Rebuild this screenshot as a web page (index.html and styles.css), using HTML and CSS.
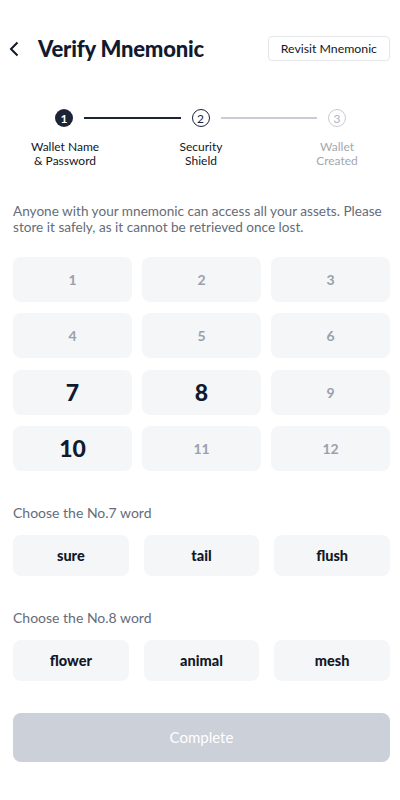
FILE: index.html
```html
<!DOCTYPE html>
<html lang="en">
<head>
    <meta charset="UTF-8">
    <meta name="viewport" content="width=device-width, initial-scale=1.0">
    <title>Verify Mnemonic</title>
    <link rel="stylesheet" href="styles.css">
</head>
<body>

    <div class="page">
        <!-- Header -->
        <div class="header">
            <span class="back">
                <svg width="10" height="16" viewBox="0 0 10 16"><path d="M8.5 1.5 L2 8 L8.5 14.5" fill="none" stroke="#111827" stroke-width="2"/></svg>
            </span>
            <h1>Verify Mnemonic</h1>
            <button class="revisit">Revisit Mnemonic</button>
        </div>

        <!-- Steps -->
        <div class="steps">
            <span class="dot done">1</span>
            <span class="line dark"></span>
            <span class="dot current">2</span>
            <span class="line"></span>
            <span class="dot todo">3</span>
        </div>
        <div class="step-labels">
            <span>Wallet Name<br>&amp; Password</span>
            <span>Security<br>Shield</span>
            <span class="muted">Wallet<br>Created</span>
        </div>

        <p class="note">Anyone with your mnemonic can access all your assets. Please store it safely, as it cannot be retrieved once lost.</p>

        <div class="words">
            <div class="cell">1</div>
            <div class="cell">2</div>
            <div class="cell">3</div>
            <div class="cell">4</div>
            <div class="cell">5</div>
            <div class="cell">6</div>
            <div class="cell big">7</div>
            <div class="cell big">8</div>
            <div class="cell">9</div>
            <div class="cell big">10</div>
            <div class="cell">11</div>
            <div class="cell">12</div>
        </div>

        <div class="question">Choose the No.7 word</div>
        <div class="options">
            <button>sure</button>
            <button>tail</button>
            <button>flush</button>
        </div>

        <div class="question">Choose the No.8 word</div>
        <div class="options">
            <button>flower</button>
            <button>animal</button>
            <button>mesh</button>
        </div>

        <button class="complete" disabled>Complete</button>
    </div>

</body>
</html>
```

FILE: styles.css
```css
body {
    margin: 0;
    font-family: Lato, "Noto Sans", sans-serif;
    background: #fff;
    color: #111827;
}

.page {
    padding: 36px 10px 0 13px;
}

.header {
    display: flex;
    align-items: center;
    height: 25px;
}

.back {
    display: flex;
    align-items: center;
    width: 29px;
    margin-left: -4px;
}

h1 {
    flex: 1;
    margin: 0;
    font-size: 22px;
    font-weight: 900;
    color: #111a2e;
    letter-spacing: -0.2px;
}

.revisit {
    height: 25px;
    padding: 0 12px;
    border: 1px solid #e5e7eb;
    border-radius: 4px;
    background: #fff;
    font-family: inherit;
    font-size: 12.3px;
    color: #111827;
}

.steps {
    display: flex;
    align-items: center;
    padding: 0 44px 0 42px;
    margin-top: 48px;
}

.dot {
    width: 18px;
    height: 18px;
    border-radius: 50%;
    box-sizing: border-box;
    display: flex;
    align-items: center;
    justify-content: center;
    font-size: 12px;
}

.dot.done {
    background: #1c2436;
    color: #fff;
    font-weight: 700;
}

.dot.current {
    border: 1.5px solid #1c2436;
    color: #1c2436;
}

.dot.todo {
    border: 1.5px solid #c7cbd2;
    color: #b0b5be;
}

.line {
    flex: 1;
    height: 1.5px;
    margin: 0 11px;
    background: #c9cdd3;
}

.line.dark {
    background: #1c2436;
}

.step-labels {
    display: flex;
    justify-content: space-between;
    margin-top: 13px;
    margin-right: 1px;
}

.step-labels span {
    width: 104px;
    text-align: center;
    font-size: 12px;
    line-height: 14px;
    color: #111827;
}

.step-labels .muted {
    color: #a3a8b1;
}

.note {
    margin: 35px 0 0;
    font-size: 13.6px;
    line-height: 16px;
    color: #656c78;
}

.words {
    display: grid;
    grid-template-columns: repeat(3, 1fr);
    column-gap: 10px;
    row-gap: 11.3px;
    margin-top: 22px;
}

.cell {
    height: 45px;
    border-radius: 8px;
    background: #f5f6f8;
    display: flex;
    align-items: center;
    justify-content: center;
    font-size: 14px;
    font-weight: 700;
    color: #9aa0ab;
}

.cell.big {
    font-size: 23px;
    font-weight: 900;
    color: #111a2e;
}

.question {
    margin-top: 33px;
    font-size: 14px;
    line-height: 18px;
    color: #656c78;
}

.options {
    display: grid;
    grid-template-columns: repeat(3, 1fr);
    gap: 15px;
    margin-top: 13px;
}

.options button {
    height: 41px;
    border: none;
    border-radius: 8px;
    background: #f5f6f8;
    font-family: inherit;
    font-size: 14.5px;
    font-weight: 900;
    color: #111827;
}

.complete {
    display: block;
    width: 100%;
    height: 49px;
    margin-top: 32px;
    border: none;
    border-radius: 8px;
    background: #cbd0d9;
    font-family: inherit;
    font-size: 15px;
    color: #fff;
}
```
